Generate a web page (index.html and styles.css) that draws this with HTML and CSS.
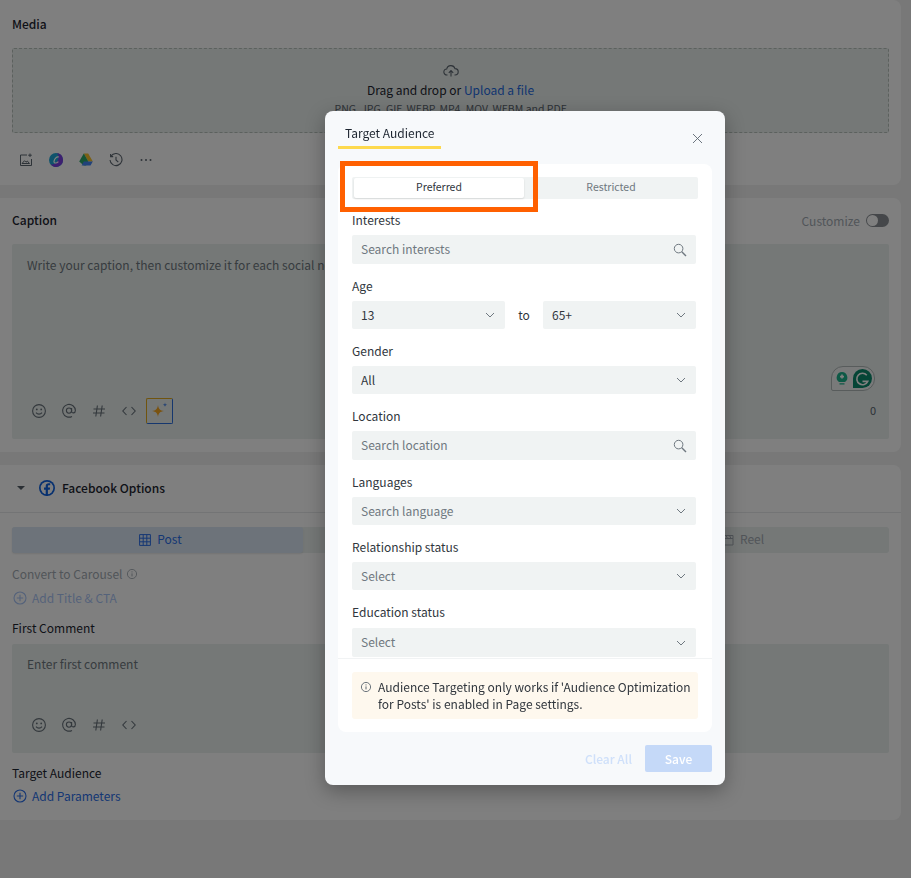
FILE: index.html
```html
<!DOCTYPE html>
<html lang="en">
<head>
  <meta charset="UTF-8">
  <title>Compose Post</title>
  <link rel="stylesheet" href="styles.css">
</head>
<body>

  <svg class="icon-defs" width="0" height="0">
    <symbol id="i-smile" viewBox="0 0 16 16"><g fill="none" stroke="currentColor" stroke-width="1.1"><circle cx="8" cy="8" r="6.4"/><path d="M5 9.6c1.5 2 4.500 2 6 0"/></g><circle cx="5.800" cy="6.400" r=".9" fill="currentColor"/><circle cx="10.200" cy="6.400" r=".9" fill="currentColor"/></symbol>
    <symbol id="i-at" viewBox="0 0 16 16"><g fill="none" stroke="currentColor" stroke-width="1.1"><circle cx="8" cy="7.600" r="2.600"/><path d="M10.600 5v3.400c0 2.200 3.800 2 3.800-.9A6.400 6.400 0 1 0 11 13.400"/></g></symbol>
    <symbol id="i-hash" viewBox="0 0 16 16"><path d="M6.400 2.500 4.800 13.500M11.200 2.500 9.600 13.500M2.500 6h11.500M2 10h11.500" fill="none" stroke="currentColor" stroke-width="1.1"/></symbol>
    <symbol id="i-code" viewBox="0 0 16 16"><path d="M5.500 4 1.800 8l3.700 4M10.500 4l3.700 4-3.700 4" fill="none" stroke="currentColor" stroke-width="1.1"/></symbol>
    <symbol id="i-chev" viewBox="0 0 12 12"><path d="M2 4l4 4 4-4" fill="none" stroke="currentColor" stroke-width="1"/></symbol>
    <symbol id="i-search" viewBox="0 0 14 14"><circle cx="5.600" cy="5.600" r="4.300" fill="none" stroke="currentColor" stroke-width="1"/><path d="M8.800 8.800l4.200 4.200" stroke="currentColor" stroke-width="1.400"/></symbol>
    <symbol id="i-plus" viewBox="0 0 14 14"><circle cx="7" cy="7" r="6" fill="none" stroke="currentColor" stroke-width="1.100"/><path d="M7 3.800v6.400M3.800 7h6.400" stroke="currentColor" stroke-width="1.100"/></symbol>
    <symbol id="i-info" viewBox="0 0 12 12"><circle cx="6" cy="6" r="4.600" fill="none" stroke="currentColor" stroke-width=".9"/><path d="M6 5.400v3M6 3.400v1" stroke="currentColor" stroke-width="1"/></symbol>
  </svg>

  <div class="page">

    <!-- Media -->
    <section class="card media-card">
      <h2 class="card-title">Media</h2>
      <div class="dropzone">
        <svg class="cloud" width="16" height="14" viewBox="0 0 16 14"><path d="M4.500 11H4A3 3 0 0 1 3.700 5 4.300 4.300 0 0 1 12 4.600 3.200 3.200 0 0 1 12 11h-.5M8 12.500V7M5.800 8.800 8 6.600l2.200 2.200" fill="none" stroke="currentColor" stroke-width="1.100"/></svg>
        <p class="drop-text">Drag and drop or <a class="link">Upload a file</a></p>
        <p class="drop-hint">PNG, JPG, GIF, WEBP, MP4, MOV, WEBM and PDF</p>
      </div>
      <div class="media-tools">
        <svg width="14" height="14" viewBox="0 0 14 14"><path d="M8 2H1.500v10.500h11V6M3 10.500l2.500-2.800L7 9.200l1.300-1.200 2.200 2.500zM11 .5v3.500M9.200 2.200h3.600" fill="none" stroke="currentColor" stroke-width="1"/></svg>
        <svg width="14" height="14" viewBox="0 0 14 14"><circle cx="7" cy="7" r="7" fill="#1ea7d8"/><path d="M8 .1a7 7 0 0 1-6.500 11.200A7 7 0 0 0 13.900 6 7 7 0 0 0 8 .1z" fill="#7a3fe0"/><path d="M9.800 4.200C9 2.800 5.400 5.200 5 8.400c-.2 2.200 2.600 2 4.400.2" fill="none" stroke="#fff" stroke-width="1.200"/></svg>
        <svg width="14" height="13" viewBox="0 0 14 13"><path d="M4.800.5h4.400l4.600 8H9.400z" fill="#f6c02c"/><path d="M4.800.5 9.400 8.500l-2.300 4H4.800L.2 8.500z" fill="#1fa463" opacity=".95"/><path d="M4.800 8.500h9l-2.300 4H2.600z" fill="#4285f4"/></svg>
        <svg width="14" height="14" viewBox="0 0 14 14"><path d="M2 3.200A6 6 0 1 1 1 7M1.600 1v2.600h2.600M7 3.800V7l2.300 2.200" fill="none" stroke="currentColor" stroke-width="1.100"/></svg>
        <svg width="14" height="14" viewBox="0 0 14 14"><g fill="currentColor"><circle cx="2.500" cy="7" r="1"/><circle cx="7" cy="7" r="1"/><circle cx="11.500" cy="7" r="1"/></g></svg>
      </div>
    </section>

    <!-- Caption -->
    <section class="card caption-card">
      <div class="caption-head">
        <h2 class="card-title">Caption</h2>
        <div class="customize">
          <span>Customize</span>
          <span class="toggle"><span class="toggle-knob"></span></span>
        </div>
      </div>
      <div class="editor caption-editor">
        <p class="placeholder">Write your caption, then customize it for each social network</p>
        <div class="grammarly">
          <svg width="14" height="15" viewBox="0 0 14 15"><path d="M7 1a5.500 5.500 0 0 0-3 10h6A5.500 5.500 0 0 0 7 1zM4.500 12.200h5v1.400h-5z" fill="#1cb28d"/><path d="M7 3.600v4M5 5.600h4" stroke="#fff" stroke-width="1.600"/></svg>
          <svg width="19" height="19" viewBox="0 0 20 20"><path d="M10 0a10 10 0 0 1 0 20H0V10A10 10 0 0 1 10 0z" fill="#0b8a6c"/><path d="M14.500 6.500a6 6 0 1 0 1 6.500H10" fill="none" stroke="#fff" stroke-width="1.700"/></svg>
        </div>
        <div class="editor-foot">
          <div class="editor-tools">
            <svg class="tool"><use href="#i-smile"/></svg>
            <svg class="tool"><use href="#i-at"/></svg>
            <svg class="tool"><use href="#i-hash"/></svg>
            <svg class="tool"><use href="#i-code"/></svg>
            <span class="ai-btn">
              <svg width="20" height="20" viewBox="0 0 20 20"><path d="M8 4c.6 4 2 5.500 6 6-4 .6-5.400 2-6 6-.6-4-2-5.400-6-6 4-.5 5.400-2 6-6z" fill="#f5a623"/><path d="M15 1.500c.2 1.500.8 2.100 2.300 2.300-1.500.2-2.100.8-2.300 2.300-.2-1.500-.8-2.100-2.300-2.300 1.500-.2 2.100-.8 2.300-2.300z" fill="#4a86e8"/></svg>
            </span>
          </div>
          <span class="counter">0</span>
        </div>
      </div>
    </section>

    <!-- Facebook options -->
    <section class="card fb-card">
      <div class="fb-head">
        <span class="caret"></span>
        <svg width="16" height="16" viewBox="0 0 16 16"><circle cx="8" cy="8" r="8" fill="#0f62e0"/><circle cx="8" cy="8" r="6.300" fill="#fff"/><path d="M8.900 16V9.800h1.900l.3-2.200H8.900V6.300c0-.7.300-1.100 1.100-1.100h1.200V3.300c-2.600-.5-4.500.2-4.500 2.800v1.500H5v2.200h1.700V16z" fill="#0f62e0"/></svg>
        <h2 class="fb-title">Facebook Options</h2>
      </div>
      <div class="fb-body">
        <div class="post-tabs">
          <span class="post-tab post-tab-on">
            <svg width="12" height="12" viewBox="0 0 12 12"><path d="M.6.600h10.800v10.800H.6zM.6 4.200h10.800M.6 7.800h10.800M4.200.6v10.800M7.800.6v10.800" fill="none" stroke="currentColor" stroke-width="1"/></svg>
            <span class="tab-label">Post</span>
          </span>
          <span class="post-tab"></span>
          <span class="post-tab post-tab-reel">
            <svg width="12" height="12" viewBox="0 0 12 12"><path d="M1 4.500h10V11H1zM1 4.500V1.500h10v3M4 1.500l1.500 3M7.500 1.500 9 4.500" fill="none" stroke="currentColor" stroke-width="1"/></svg>
            <span class="tab-label">Reel</span>
          </span>
        </div>
        <p class="muted-row">Convert to Carousel <svg class="mini-info"><use href="#i-info"/></svg></p>
        <p class="add-row add-row-off"><svg class="plus"><use href="#i-plus"/></svg>Add Title &amp; CTA</p>
        <p class="field-name">First Comment</p>
        <div class="editor comment-editor">
          <p class="placeholder">Enter first comment</p>
          <div class="editor-foot">
            <div class="editor-tools">
              <svg class="tool"><use href="#i-smile"/></svg>
              <svg class="tool"><use href="#i-at"/></svg>
              <svg class="tool"><use href="#i-hash"/></svg>
              <svg class="tool"><use href="#i-code"/></svg>
            </div>
          </div>
        </div>
        <p class="field-name audience-name">Target Audience</p>
        <p class="add-row"><svg class="plus"><use href="#i-plus"/></svg>Add Parameters</p>
      </div>
    </section>
  </div>

  <div class="overlay"></div>

  <!-- Target Audience modal -->
  <div class="modal">
    <div class="modal-head">
      <span class="modal-title">Target Audience</span>
      <svg class="modal-close" width="11" height="11" viewBox="0 0 11 11"><path d="M1 1l9 9M10 1l-9 9" stroke="currentColor" stroke-width=".9"/></svg>
    </div>

    <div class="modal-card">
      <div class="segment">
        <span class="segment-item segment-on">Preferred</span>
        <span class="segment-item">Restricted</span>
      </div>

      <div class="modal-scroll">
        <div class="field">
          <label>Interests</label>
          <div class="control control-search"><span>Search interests</span><svg class="ctl-icon"><use href="#i-search"/></svg></div>
        </div>
        <div class="field">
          <label>Age</label>
          <div class="age-row">
            <div class="control"><span class="val">13</span><svg class="ctl-icon"><use href="#i-chev"/></svg></div>
            <span class="age-to">to</span>
            <div class="control"><span class="val">65+</span><svg class="ctl-icon"><use href="#i-chev"/></svg></div>
          </div>
        </div>
        <div class="field">
          <label>Gender</label>
          <div class="control"><span class="val">All</span><svg class="ctl-icon"><use href="#i-chev"/></svg></div>
        </div>
        <div class="field">
          <label>Location</label>
          <div class="control control-search"><span>Search location</span><svg class="ctl-icon"><use href="#i-search"/></svg></div>
        </div>
        <div class="field">
          <label>Languages</label>
          <div class="control"><span>Search language</span><svg class="ctl-icon"><use href="#i-chev"/></svg></div>
        </div>
        <div class="field">
          <label>Relationship status</label>
          <div class="control"><span>Select</span><svg class="ctl-icon"><use href="#i-chev"/></svg></div>
        </div>
        <div class="field field-last">
          <label>Education status</label>
          <div class="control"><span>Select</span><svg class="ctl-icon"><use href="#i-chev"/></svg></div>
        </div>
      </div>

      <div class="notice-wrap">
        <div class="notice">
          <svg class="notice-icon"><use href="#i-info"/></svg>
          <p>Audience Targeting only works if 'Audience Optimization for Posts' is enabled in Page settings.</p>
        </div>
      </div>
    </div>

    <div class="modal-foot">
      <span class="clear-btn">Clear All</span>
      <span class="save-btn">Save</span>
    </div>

    <!-- Orange annotation box -->
    <div class="highlight"></div>
  </div>

</body>
</html>
```

FILE: styles.css
```css
/* General Styles */
* {
  box-sizing: border-box;
}

html,
body {
  margin: 0;
  height: 100%;
  overflow: hidden;
}

body {
  font-family: "Noto Sans CJK SC", "Noto Sans", sans-serif;
  font-size: 12px;
  color: #1d2530;
  background-color: #f1f1f1;
}

p,
h2 {
  margin: 0;
}

.icon-defs {
  position: absolute;
}

.page {
  width: 901px;
  display: flex;
  flex-direction: column;
  gap: 13px;
}

.card {
  background-color: #ffffff;
  border-radius: 0 8px 8px 0;
}

.card-title {
  font-size: 12px;
  font-weight: 500;
  line-height: 20px;
}

.link {
  color: #1f6ae0;
}

/* Media */
.media-card {
  height: 185px;
  padding: 14px 12px 0;
}

.dropzone {
  height: 85px;
  margin-top: 14px;
  border: 1px dashed #b9c2bd;
  border-radius: 2px;
  background-color: #eaf0ee;
  display: flex;
  flex-direction: column;
  align-items: center;
  overflow: hidden;
  padding-top: 15px;
}

.cloud {
  color: #5c6670;
  flex: none;
}

.drop-text {
  line-height: 20px;
  margin-top: 2px;
}

.drop-hint {
  font-size: 10.5px;
  line-height: 14px;
  margin-top: 2px;
  color: #5c6670;
}

.media-tools {
  display: flex;
  gap: 16px;
  padding: 20px 0 0 7px;
  color: #5c6670;
}

/* Caption */
.caption-card {
  height: 254px;
  padding: 12px 12px 0;
}

.caption-head {
  display: flex;
  justify-content: space-between;
  align-items: center;
  height: 20px;
}

.customize {
  display: flex;
  align-items: center;
  gap: 6px;
  color: #a3abb3;
}

.toggle {
  width: 23px;
  height: 13px;
  border-radius: 7px;
  background-color: #8a8f94;
  display: flex;
  padding: 1px;
}

.toggle-knob {
  width: 11px;
  height: 11px;
  border-radius: 50%;
  background-color: #ffffff;
}

.editor {
  position: relative;
  background-color: #eaf0ee;
  border-radius: 2px;
  display: flex;
  flex-direction: column;
  justify-content: space-between;
  padding: 12px 15px 15px;
}

.caption-editor {
  height: 195px;
  margin-top: 14px;
}

.comment-editor {
  height: 109px;
  margin-top: 7px;
  padding-top: 11px;
}

.placeholder {
  color: #6f7880;
  line-height: 18px;
}

.editor-foot {
  display: flex;
  justify-content: space-between;
  align-items: center;
}

.editor-tools {
  display: flex;
  align-items: center;
  gap: 14px;
  min-height: 26px;
  padding-left: 4px;
  color: #667079;
}

.tool {
  width: 16px;
  height: 16px;
}

.ai-btn {
  width: 27px;
  height: 26px;
  margin-left: -5px;
  border: 1px solid;
  border-color: #e0a81c #2c6fdc #2c6fdc #e0a81c;
  border-radius: 2px;
  display: flex;
  align-items: center;
  justify-content: center;
}

.counter {
  font-size: 11px;
  color: #5c6670;
  margin: 0 -2px 2px 0;
}

/* Grammarly badge sits over the editor */
.grammarly {
  position: absolute;
  left: 819px;
  top: 122px;
  width: 44px;
  height: 25px;
  border: 1px solid #b0b8b8;
  border-radius: 12px 12px 12px 2px;
  background-color: #f2f5f5;
  display: flex;
  align-items: center;
  gap: 4px;
  padding-left: 3px;
}

/* Facebook options */
.fb-card {
  height: 355px;
}

.fb-head {
  height: 48px;
  border-bottom: 1px solid #e6e9ea;
  display: flex;
  align-items: center;
  padding: 0 0 1px 17px;
  gap: 13px;
}

.caret {
  border: 4px solid transparent;
  border-top: 4px solid #555f68;
  border-bottom-width: 0;
  width: 0;
  height: 0;
  margin-right: 1px;
}

.fb-title {
  font-size: 12px;
  font-weight: 500;
  margin: 0 0 2px -6px;
}

.fb-body {
  padding: 14px 12px 0;
}

.post-tabs {
  display: flex;
  height: 26px;
  border-radius: 3px;
  background-color: #eaf0ee;
}

.post-tab {
  flex: 1;
  display: flex;
  align-items: center;
  justify-content: center;
  gap: 6px;
  color: #a3abb3;
  line-height: 22px;
}

.tab-label {
  margin-bottom: 3px;
}

.post-tab-on {
  flex: none;
  width: 291px;
  padding-left: 6px;
  color: #2a6ee8;
  background-color: #dbe7f5;
  border-radius: 3px;
  box-shadow: 0 1px 2px rgba(0, 0, 0, 0.1);
}

.post-tab-reel {
  padding-left: 2px;
}

.muted-row {
  display: flex;
  align-items: center;
  gap: 4px;
  margin-top: 12px;
  color: #a3abb3;
  line-height: 18px;
}

.mini-info {
  width: 12px;
  height: 12px;
}

.add-row {
  display: flex;
  align-items: center;
  gap: 5px;
  padding-left: 1px;
  color: #2a6ee8;
  line-height: 18px;
}

.add-row-off {
  margin-top: 6px;
  opacity: 0.4;
}

.plus {
  width: 14px;
  height: 14px;
}

.field-name {
  margin-top: 12px;
  line-height: 18px;
}

.audience-name {
  margin-top: 11px;
  margin-bottom: 5px;
}

/* Overlay */
.overlay {
  position: fixed;
  inset: 0;
  background-color: rgba(0, 0, 0, 0.5);
}

/* Modal */
.modal {
  position: absolute;
  left: 325px;
  top: 111px;
  width: 400px;
  height: 674px;
  background-color: #f7f9fb;
  border-radius: 8px;
  box-shadow: 0 6px 20px rgba(0, 0, 0, 0.3);
  color: #30363d;
}

.modal-head {
  height: 53px;
  padding: 0 13px;
  position: relative;
}

.modal-title {
  display: inline-block;
  height: 38px;
  padding: 12px 7px 0;
  width: 103px;
  line-height: 20px;
  color: #1d2530;
  border-bottom: 3px solid #fdd94e;
  white-space: nowrap;
}

.modal-close {
  position: absolute;
  right: 22px;
  top: 22px;
  color: #5c6670;
}

.modal-card {
  margin: 0 13px;
  height: 568px;
  background-color: #ffffff;
  border-radius: 8px;
  display: flex;
  flex-direction: column;
}

.segment {
  margin: 13px 14px 11px;
  height: 22px;
  flex: none;
  display: flex;
  background-color: #f0f3f3;
  border-radius: 2px;
  padding: 1px 0 1px 2px;
  font-size: 10.5px;
  line-height: 18px;
}

.segment-item {
  flex: 1;
  display: flex;
  align-items: center;
  justify-content: center;
  padding-bottom: 2px;
  color: #6f7880;
}

.segment-on {
  flex: none;
  width: 170px;
  background-color: #ffffff;
  border-radius: 2px;
  color: #30363d;
  box-shadow: 0 1px 2px rgba(0, 0, 0, 0.12);
}

.modal-scroll {
  height: 449px;
  flex: none;
  overflow: hidden;
  padding: 0 16px 0 14px;
  border-bottom: 1px solid #f1f3f4;
}

.field {
  margin-bottom: 12px;
}

.field label {
  display: block;
  line-height: 20px;
  color: #30363d;
}

.field-last .control {
  height: 29px;
  margin-top: 6px;
}

.control {
  height: 28px;
  margin-top: 5px;
  padding: 0 9px;
  background-color: #f0f3f3;
  border-radius: 2px;
  display: flex;
  align-items: center;
  justify-content: space-between;
  color: #6f7880;
}

.control span {
  margin-bottom: 2px;
}

.control-search {
  height: 29px;
}

.control .val {
  color: #30363d;
}

.ctl-icon {
  width: 12px;
  height: 12px;
  flex: none;
  color: #6f7880;
}

.control-search .ctl-icon {
  width: 14px;
  height: 14px;
}

.age-row {
  display: grid;
  grid-template-columns: 153px 38px 153px;
  align-items: end;
}

.age-to {
  text-align: center;
  line-height: 28px;
}

.notice-wrap {
  padding: 13px 14px 0;
}

.notice {
  height: 47px;
  background-color: #fef8ee;
  border-radius: 3px;
  display: flex;
  gap: 6px;
  padding: 6px 4px 6px 8px;
  line-height: 17px;
}

.notice p {
  flex: 1;
}

.notice-icon {
  width: 12px;
  height: 12px;
  flex: none;
  margin-top: 3px;
  color: #5c6670;
}

.modal-foot {
  display: flex;
  justify-content: flex-end;
  align-items: center;
  gap: 13px;
  padding: 13px 13px 0;
}

.clear-btn {
  color: #cfe0fa;
  font-weight: 500;
}

.save-btn {
  width: 67px;
  height: 27px;
  background-color: #c5d9f8;
  border-radius: 2px;
  color: #ffffff;
  font-weight: 500;
  display: flex;
  align-items: center;
  justify-content: center;
}

.highlight {
  position: absolute;
  left: 15px;
  top: 50px;
  width: 198px;
  height: 51px;
  border: 5px solid #ff6000;
}
```
